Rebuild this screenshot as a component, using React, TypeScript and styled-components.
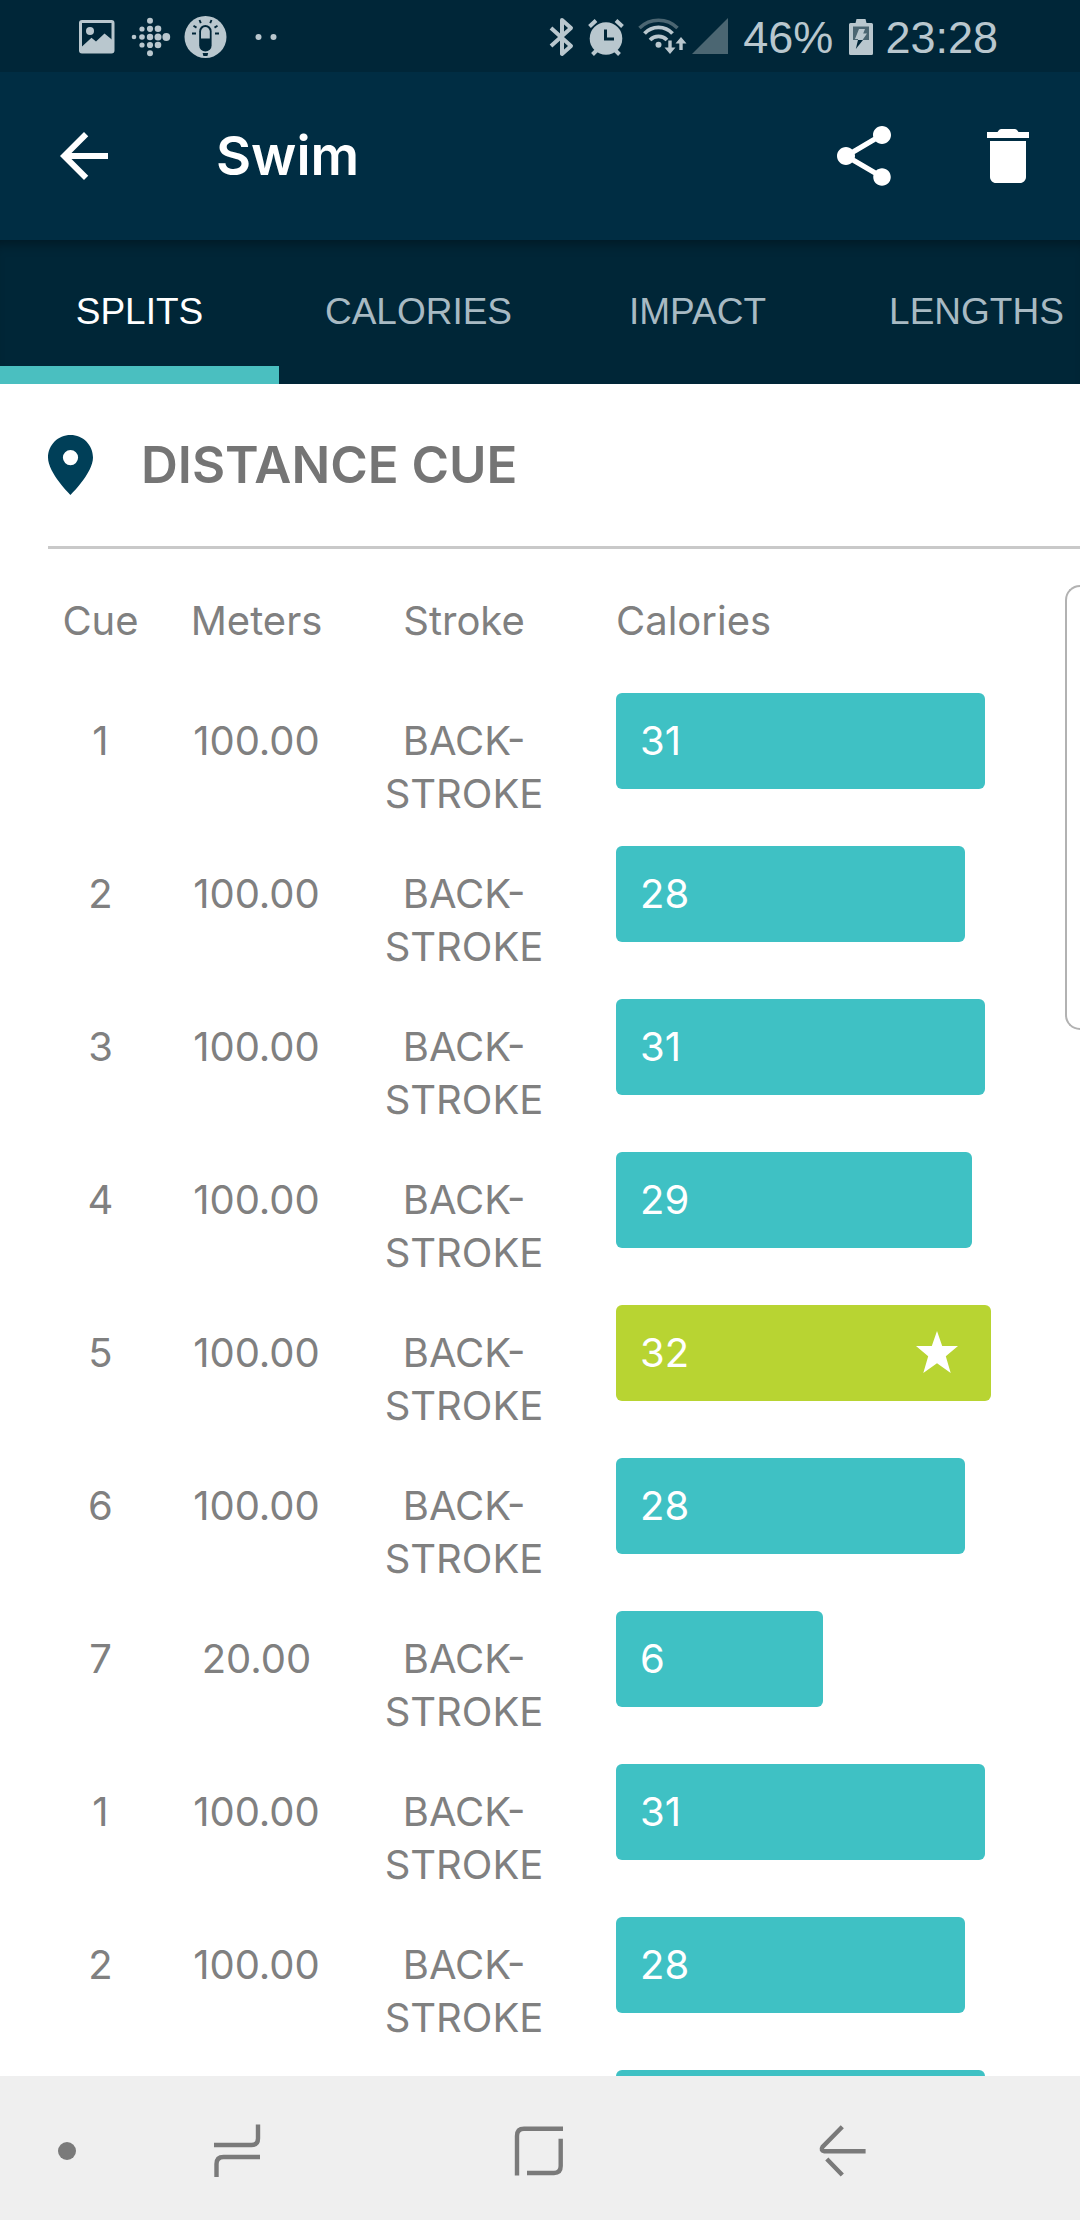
import React, { useState } from 'react';
import styled, { createGlobalStyle } from 'styled-components';

const color = {
  status: '#002638',
  bar: '#002d43',
  tabs: '#002637',
  statusInk: '#b9c7ce',
  statusDim: '#4b6672',
  tabInk: '#a8bac3',
  teal: '#3fc1c4',
  lime: '#b8d432',
  pin: '#003f58',
  heading: '#757575',
  text: '#808080',
  rule: '#c9c9c9',
  nav: '#efefef',
  navInk: '#7a7a7a',
};

const GlobalStyle = createGlobalStyle`
  * { box-sizing: border-box; }
  body { margin: 0; background: #fff; font-family: Inter, 'Open Sans', sans-serif; }
  button { margin: 0; padding: 0; border: 0; background: none; color: inherit; font: inherit; cursor: pointer; }
  svg { display: block; flex: none; overflow: visible; }
`;

const Screen = styled.div`
  position: relative;
  display: flex;
  flex-direction: column;
  height: 100vh;
  overflow: hidden;
`;

const StatusBar = styled.div`
  display: flex;
  flex: none;
  align-items: center;
  justify-content: space-between;
  height: 72px;
  padding: 4px 82px 0 79px;
  background: ${color.status};
  color: ${color.statusInk};
  font-family: 'Liberation Sans', Arial, sans-serif;
  font-size: 45px;
  line-height: 52px;
`;

const StatusGroup = styled.div<{ $gap: number }>`
  display: flex;
  align-items: center;
  gap: ${(p) => p.$gap}px;
`;

const AppBar = styled.header`
  display: flex;
  flex: none;
  align-items: center;
  height: 168px;
  padding: 0 36px 0 48px;
  background: ${color.bar};
  color: #fff;
`;

const Title = styled.h1`
  flex: 1;
  margin: 0 0 0 96px;
  font-size: 54px;
  font-weight: 600;
  line-height: 72px;
`;

const Actions = styled.div`
  display: flex;
  gap: 72px;
`;

const IconButton = styled.button`
  width: 72px;
  height: 72px;
`;

const Tabs = styled.nav`
  display: flex;
  flex: none;
  height: 144px;
  overflow: hidden;
  background: ${color.tabs};
  box-shadow: inset 0 12px 12px -8px rgba(0, 0, 0, 0.35);
`;

const Tab = styled.button<{ $active: boolean }>`
  flex: 0 0 279px;
  color: ${(p) => (p.$active ? '#fff' : color.tabInk)};
  font-family: 'Liberation Sans', Arial, sans-serif;
  font-size: 37px;
  box-shadow: ${(p) => (p.$active ? 'inset 0 -18px #4abfc0' : 'none')};
`;

const Content = styled.main`
  flex: 1;
  min-height: 0;
  padding-left: 48px;
  overflow: hidden;
`;

const SectionHeader = styled.div`
  display: flex;
  align-items: center;
  gap: 48px;
  height: 165px;
  border-bottom: 3px solid ${color.rule};
`;

const SectionTitle = styled.h2`
  margin: 0;
  color: ${color.heading};
  font-size: 51px;
  font-weight: 600;
  line-height: 60px;
`;

const TableArea = styled.div`
  padding-right: 89px;
`;

const Table = styled.table`
  width: 100%;
  table-layout: fixed;
  border-collapse: collapse;
  color: ${color.text};
  font-size: 40px;
  line-height: 53px;
`;

const Column = styled.col<{ $width?: number }>`
  width: ${(p) => (p.$width ? `${p.$width}px` : 'auto')};
`;

const HeadCell = styled.th<{ $wide?: boolean }>`
  height: 144px;
  padding: 45px 0 0 ${(p) => (p.$wide ? 48 : 0)}px;
  font-weight: 400;
  text-align: ${(p) => (p.$wide ? 'left' : 'center')};
  vertical-align: top;
`;

const Cell = styled.td`
  height: 153px;
  padding: 21px 0 0;
  text-align: center;
  vertical-align: top;
`;

const BarCell = styled.td`
  padding: 0 0 0 48px;
  vertical-align: top;
`;

const Bar = styled.div<{ $best: boolean }>`
  display: flex;
  align-items: center;
  justify-content: space-between;
  height: 96px;
  padding: 0 33px 2px 24px;
  border-radius: 6px;
  background: ${(p) => (p.$best ? color.lime : color.teal)};
  color: #fff;
`;

const EdgeHandle = styled.div`
  position: absolute;
  top: 585px;
  right: 0;
  width: 15px;
  height: 445px;
  border: 2px solid #b2b2b2;
  border-right: 0;
  border-radius: 20px 0 0 20px;
`;

const NavBar = styled.nav`
  display: grid;
  flex: none;
  grid-template-columns: 134fr 206fr 398fr 208fr 134fr;
  height: 144px;
  background: ${color.nav};
  color: ${color.navInk};
`;

const NavButton = styled.button`
  display: flex;
  align-items: center;
  justify-content: center;
`;

const PictureIcon = () => (
  <svg width="36" height="40" viewBox="0 0 36 40" aria-hidden="true">
    <rect x="1.5" y="3.5" width="32.5" height="30.5" rx="1.5" fill="none" stroke="currentColor" strokeWidth="3" />
    <circle cx="11" cy="13" r="4" fill="currentColor" />
    <path d="M3 28.5 12.5 19.7 17 23.5 25.5 15.5 34 22.5V34H3z" fill="currentColor" />
  </svg>
);

const trackerDots: [number, number, number][] = [
  [3, 19, 2.3],
  [11, 11, 2.6], [11, 19, 2.8], [11, 27, 2.6],
  [19, 2.8, 3], [19, 10.8, 3.1], [19, 19, 3.2], [19, 27, 3.1], [19, 35.2, 3],
  [27, 10.8, 3.3], [27, 19, 3.5], [27, 27, 3.3],
  [35.3, 19, 3.9],
];

const TrackerIcon = () => (
  <svg width="38" height="40" viewBox="0 0 38 40" fill="currentColor" aria-hidden="true">
    {trackerDots.map(([x, y, r]) => (
      <circle key={`${x}-${y}`} cx={x} cy={y} r={r} />
    ))}
  </svg>
);

const LampIcon = () => (
  <svg width="42" height="40" viewBox="0 0 42 40" aria-hidden="true">
    <circle cx="20.5" cy="19" r="21" fill="currentColor" />
    <rect x="14.2" y="7" width="12.4" height="26.6" rx="6.2" fill={color.status} />
    <path d="M16 20.5v-7a4.4 4.4 0 0 1 8.800 0v7z" fill="currentColor" />
    <path d="M17.600 35h5.600l-.8 3h-4z" fill={color.status} />
    <path d="M7 15.500h4M30 15.500h4M8.500 7.800l3 1.800M32.500 7.800l-3 1.800M14.500 2l1.300 3.200M26.500 2l-1.300 3.200" stroke={color.status} strokeWidth="1.900" />
  </svg>
);

const MoreDots = () => (
  <svg width="36" height="40" viewBox="0 0 36 40" fill="currentColor" aria-hidden="true">
    <circle cx="15.5" cy="19" r="3" />
    <circle cx="30.500" cy="19" r="3" />
  </svg>
);

const BluetoothIcon = () => (
  <svg width="27" height="40" viewBox="0 0 27 40" aria-hidden="true">
    <path d="M2 10 22 28l-9 8V2l9 8L2 28" fill="none" stroke="currentColor" strokeWidth="4" strokeLinejoin="round" />
  </svg>
);

const AlarmIcon = () => (
  <svg width="38" height="40" viewBox="0 0 38 40" aria-hidden="true">
    <circle cx="18" cy="20.500" r="16.300" fill="currentColor" />
    <path d="M1.500 8.500 8 2.500M34.500 8.500 28 2.500M4.500 36.500l5-5M31.500 36.500l-5-5" stroke="currentColor" strokeWidth="4" />
    <path d="M17.500 11.500v9.500h8.500" fill="none" stroke={color.status} strokeWidth="3" />
  </svg>
);

const NetworkIcon = () => (
  <svg width="93" height="40" viewBox="0 0 93 40" fill="none" aria-hidden="true">
    <path d="M1.500 10A27 27 0 0 1 39.500 10" stroke={color.statusDim} strokeWidth="3.500" />
    <path d="M6.500 15.500A19 19 0 0 1 34.500 15.500M12 22A12 12 0 0 1 29 22" stroke="currentColor" strokeWidth="3.800" />
    <circle cx="20.500" cy="26.800" r="3" fill="currentColor" />
    <path d="M32 22.500v9M43 23v9" stroke="currentColor" strokeWidth="3.400" />
    <path d="M26.500 29.500h11L32 36zM37.500 25.500h11L43 19z" fill="currentColor" />
    <path d="M54 36 90 0v36z" fill={color.statusDim} />
  </svg>
);

const BatteryIcon = () => (
  <svg width="28" height="40" viewBox="0 0 28 40" aria-hidden="true">
    <path d="M5.500 5H10.500l1-4h9l1 4H26.500a1.500 1.500 0 0 1 1.500 1.500V35.500a1.500 1.500 0 0 1-1.500 1.500H5.500A1.500 1.500 0 0 1 4 35.500V6.500A1.500 1.500 0 0 1 5.500 5z" fill="currentColor" />
    <path d="M8 8.500h16V22H8z" fill={color.statusDim} />
    <path d="M14 11h6l-1.800 4.500H22L17.500 22H13v-1H10z" fill="currentColor" />
    <path d="M13 22h5l-7.200 9z" fill={color.status} />
  </svg>
);

const BackIcon = () => (
  <svg width="72" height="72" viewBox="0 0 24 24" fill="currentColor" aria-hidden="true">
    <path d="M20 11H7.830l5.590-5.590L12 4l-8 8 8 8 1.410-1.410L7.830 13H20v-2z" />
  </svg>
);

const ShareIcon = () => (
  <svg width="72" height="72" viewBox="0 0 24 24" fill="currentColor" aria-hidden="true">
    <path d="M18 16.080c-.76 0-1.440.3-1.960.77L8.910 12.700c.05-.23.09-.46.09-.7s-.04-.47-.09-.7l7.050-4.110c.54.5 1.250.81 2.040.81 1.660 0 3-1.340 3-3s-1.340-3-3-3-3 1.340-3 3c0 .24.04.47.09.7L8.040 9.810C7.500 9.310 6.790 9 6 9c-1.660 0-3 1.340-3 3s1.340 3 3 3c.79 0 1.500-.31 2.040-.81l7.120 4.160c-.05.21-.08.43-.08.65 0 1.610 1.310 2.920 2.920 2.920s2.920-1.310 2.920-2.920-1.310-2.920-2.920-2.920z" />
  </svg>
);

const TrashIcon = () => (
  <svg width="72" height="72" viewBox="0 0 24 24" fill="currentColor" aria-hidden="true">
    <path d="M6 19c0 1.100.9 2 2 2h8c1.100 0 2-.9 2-2V7H6v12zM19 4h-3.500l-.5-.7q-.3-.3-.8-.3H9.800q-.5 0-.8.300L8.500 4H5v2h14V4z" />
  </svg>
);

const PinIcon = () => (
  <svg width="45" height="60" viewBox="0 0 45 60" aria-hidden="true">
    <path
      d="M22.500 0C10 0 0 10 0 22.500 0 38 22.500 60 22.500 60S45 38 45 22.500C45 10 35 0 22.500 0zm0 15a7.600 7.600 0 1 1 0 15.200 7.600 7.600 0 0 1 0-15.200z"
      fill={color.pin}
    />
  </svg>
);

const StarIcon = () => (
  <svg width="42" height="42" viewBox="0 0 42 42" role="img" aria-label="Best">
    <path d="M21 0 26.200 15H42L29.800 25.300 34.700 42 21 32.200 7.300 42 12.200 25.300 0 15H15.800z" fill="currentColor" />
  </svg>
);

const NavIcon = ({ d }: { d: string }) => (
  <svg width="60" height="60" viewBox="0 0 60 60" aria-hidden="true">
    <path d={d} fill="none" stroke="currentColor" strokeWidth="4.400" />
  </svg>
);

const recentsPath = 'M7 27H44.500Q51 27 51 20.500V6.500M53 39H16.500Q9.500 39 9.500 46V59';
const homePath = 'M8 57.500V18Q8 10.800 15 10.800H54M18 55H45Q51.700 55 51.700 48V20.700';
const returnPath = 'M53.600 33.300H12.500Q8.200 32.500 10.500 29L30.300 8.700M14.800 41 30.300 57';

const tabNames = ['SPLITS', 'CALORIES', 'IMPACT', 'LENGTHS'];

interface Split {
  cue: number;
  meters: string;
  calories: number;
}

const splits: Split[] = [
  { cue: 1, meters: '100.00', calories: 31 },
  { cue: 2, meters: '100.00', calories: 28 },
  { cue: 3, meters: '100.00', calories: 31 },
  { cue: 4, meters: '100.00', calories: 29 },
  { cue: 5, meters: '100.00', calories: 32 },
  { cue: 6, meters: '100.00', calories: 28 },
  { cue: 7, meters: '20.00', calories: 6 },
  { cue: 1, meters: '100.00', calories: 31 },
  { cue: 2, meters: '100.00', calories: 28 },
  { cue: 3, meters: '100.00', calories: 31 },
];

const best = Math.max(...splits.map((s) => s.calories));

/* Every bar keeps a base length, so that small values still have room for their number. */
const barWidth = (calories: number) => `${45 + (55 * calories) / best}%`;

const SplitRow = ({ split }: { split: Split }) => {
  const isBest = split.calories === best;
  return (
    <tr>
      <Cell>{split.cue}</Cell>
      <Cell>{split.meters}</Cell>
      <Cell>
        BACK-
        <br />
        STROKE
      </Cell>
      <BarCell>
        <Bar $best={isBest} style={{ width: barWidth(split.calories) }}>
          {split.calories}
          {isBest && <StarIcon />}
        </Bar>
      </BarCell>
    </tr>
  );
};

export default function App() {
  const [tab, setTab] = useState('SPLITS');
  return (
    <Screen>
      <GlobalStyle />
      <StatusBar>
        <StatusGroup $gap={16}>
          <PictureIcon />
          <TrackerIcon />
          <LampIcon />
          <MoreDots />
        </StatusGroup>
        <StatusGroup $gap={12}>
          <BluetoothIcon />
          <AlarmIcon />
          <NetworkIcon />
          <span>46%</span>
          <BatteryIcon />
          <span>23:28</span>
        </StatusGroup>
      </StatusBar>
      <AppBar>
        <IconButton aria-label="Back">
          <BackIcon />
        </IconButton>
        <Title>Swim</Title>
        <Actions>
          <IconButton aria-label="Share">
            <ShareIcon />
          </IconButton>
          <IconButton aria-label="Delete">
            <TrashIcon />
          </IconButton>
        </Actions>
      </AppBar>
      <Tabs>
        {tabNames.map((name) => (
          <Tab key={name} $active={name === tab} onClick={() => setTab(name)}>
            {name}
          </Tab>
        ))}
      </Tabs>
      <Content>
        <SectionHeader>
          <PinIcon />
          <SectionTitle>DISTANCE CUE</SectionTitle>
        </SectionHeader>
        <TableArea>
          <Table>
            <colgroup>
              <Column $width={105} />
              <Column $width={207} />
              <Column $width={208} />
              <Column />
            </colgroup>
            <thead>
              <tr>
                <HeadCell scope="col">Cue</HeadCell>
                <HeadCell scope="col">Meters</HeadCell>
                <HeadCell scope="col">Stroke</HeadCell>
                <HeadCell scope="col" $wide>
                  Calories
                </HeadCell>
              </tr>
            </thead>
            <tbody>
              {splits.map((split, index) => (
                <SplitRow key={index} split={split} />
              ))}
            </tbody>
          </Table>
        </TableArea>
      </Content>
      <NavBar>
        <NavButton aria-label="Hide navigation bar">
          <svg width="60" height="60" viewBox="0 0 60 60" aria-hidden="true">
            <circle cx="30" cy="33" r="9" fill="currentColor" />
          </svg>
        </NavButton>
        <NavButton aria-label="Recent apps">
          <NavIcon d={recentsPath} />
        </NavButton>
        <NavButton aria-label="Home">
          <NavIcon d={homePath} />
        </NavButton>
        <NavButton aria-label="Return">
          <NavIcon d={returnPath} />
        </NavButton>
      </NavBar>
      <EdgeHandle />
    </Screen>
  );
}
